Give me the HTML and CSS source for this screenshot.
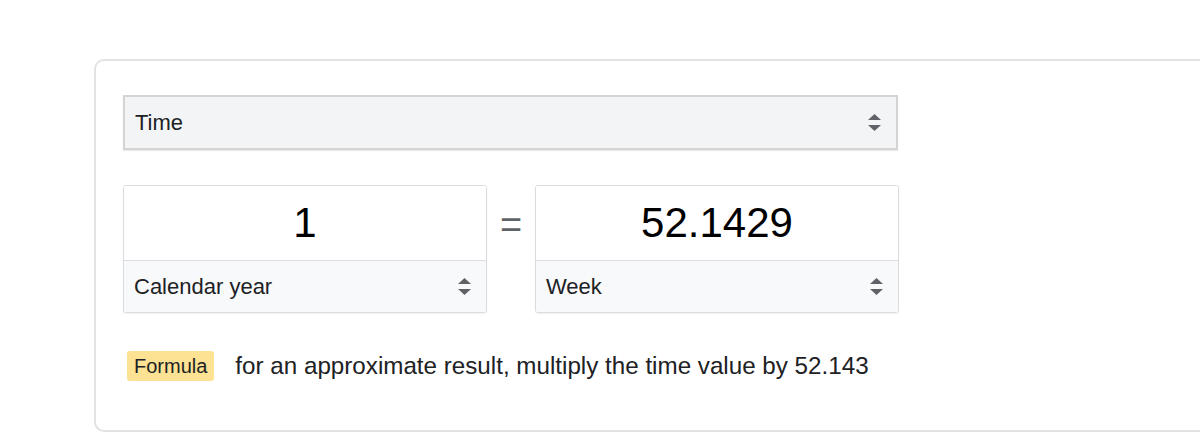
FILE: index.html
```html
<!DOCTYPE html>
<html lang="en">
<head>
    <meta charset="UTF-8">
    <meta name="viewport" content="width=device-width, initial-scale=1.0">
    <title>Unit converter - Time</title>
    <link rel="stylesheet" href="styles.css">
</head>
<body>
    <div class="converter-card">
        <div class="unit-select category-select">
            <span>Time</span>
            <svg class="arrows" width="13" height="17" viewBox="0 0 13 17"><polygon points="0,6 6.5,0 13,6"/><polygon points="0,11 13,11 6.5,17"/></svg>
        </div>
        <div class="convert-row">
            <div class="unit-box">
                <input class="unit-value" type="text" value="1">
                <div class="unit-select">
                    <span>Calendar year</span>
                    <svg class="arrows" width="13" height="17" viewBox="0 0 13 17"><polygon points="0,6 6.5,0 13,6"/><polygon points="0,11 13,11 6.5,17"/></svg>
                </div>
            </div>
            <div class="equals">=</div>
            <div class="unit-box">
                <input class="unit-value" type="text" value="52.1429">
                <div class="unit-select">
                    <span>Week</span>
                    <svg class="arrows" width="13" height="17" viewBox="0 0 13 17"><polygon points="0,6 6.5,0 13,6"/><polygon points="0,11 13,11 6.5,17"/></svg>
                </div>
            </div>
        </div>
        <div class="formula-row">
            <span class="formula-badge">Formula</span>
            <span class="formula-text">for an approximate result, multiply the time value by 52.143</span>
        </div>
    </div>
</body>
</html>
```

FILE: styles.css
```css
body {
    font-family: "Liberation Sans", Arial, sans-serif;
    background-color: #ffffff;
    color: #202124;
    margin: 0;
    overflow: hidden;
}
.converter-card {
    margin: 59px 0 0 94px;
    height: 373px;
    box-sizing: border-box;
    border: 2px solid #e2e2e2;
    border-right: none;
    border-radius: 10px 0 0 10px;
    padding: 34px 0 0 27px;
}
.unit-select {
    display: flex;
    align-items: center;
    justify-content: space-between;
    box-sizing: border-box;
    padding: 0 15px 0 10px;
    background-color: #f8f9fa;
    font-size: 22px;
    color: #202124;
}
.unit-select .arrows {
    fill: #5f6368;
}
.category-select {
    width: 775px;
    height: 55px;
    background-color: #f3f4f6;
    border: 2px solid #d4d4d4;
    box-shadow: 0 1px 1px rgba(0, 0, 0, 0.08);
}
.convert-row {
    display: flex;
    align-items: flex-start;
    margin-top: 35px;
}
.unit-box {
    display: flex;
    flex-direction: column;
    width: 364px;
    height: 128px;
    box-sizing: border-box;
    border: 1px solid #dadce0;
    border-radius: 3px;
    box-shadow: 0 1px 2px rgba(0, 0, 0, 0.06);
    overflow: hidden;
}
.unit-value {
    height: 75px;
    box-sizing: border-box;
    border: none;
    border-bottom: 1px solid #dadce0;
    padding: 0 10px;
    font-family: inherit;
    font-size: 42px;
    color: #000000;
    text-align: center;
    outline: none;
}
.unit-box .unit-select {
    flex: 1;
}
.equals {
    width: 48px;
    margin-top: 21px;
    text-align: center;
    font-size: 38px;
    color: #5f6368;
    line-height: 1;
}
.formula-row {
    display: flex;
    align-items: center;
    gap: 21px;
    margin-top: 38px;
    margin-left: 4px;
}
.formula-badge {
    display: inline-flex;
    align-items: center;
    height: 30px;
    padding: 0 7px;
    background-color: #fde293;
    border-radius: 3px;
    font-size: 20px;
    color: #202124;
}
.formula-text {
    font-size: 24.2px;
    color: #202124;
}
```
